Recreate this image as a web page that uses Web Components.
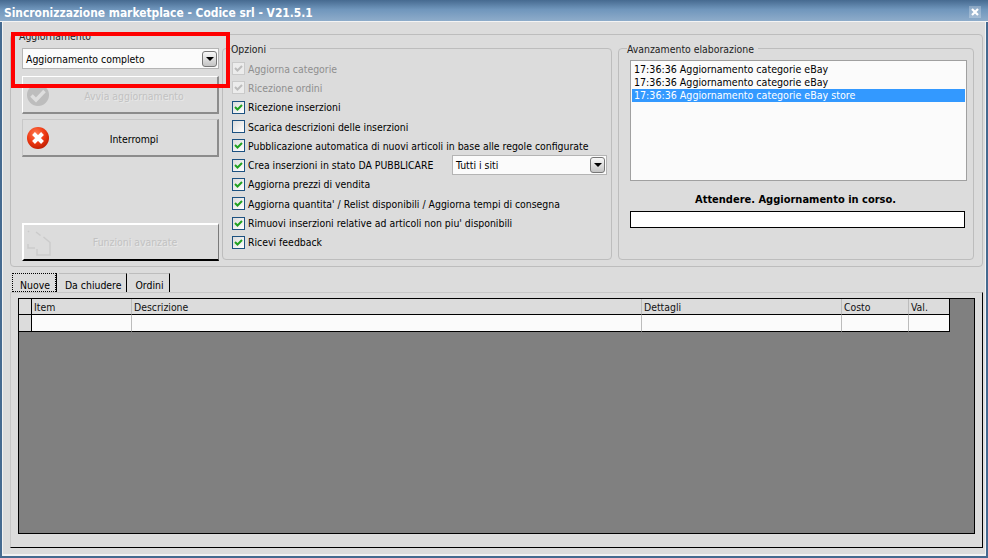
<!DOCTYPE html>
<html lang="it">
<head>
<meta charset="utf-8">
<title>Sincronizzazione marketplace</title>
<style>
    html, body { margin: 0; padding: 0; }
    body {
        position: relative;
        width: 988px;
        height: 558px;
        overflow: hidden;
        font: 10.4px "DejaVu Sans Condensed", "DejaVu Sans", sans-serif;
        color: #000;
    }
    .row { display: flex; align-items: center; justify-content: space-between; }
</style>
</head>
<body>
<app-window>
    <app-titlebar slot="title">Sincronizzazione marketplace - Codice srl - V21.5.1</app-titlebar>

    <app-panel>
        <app-column>
            <span slot="legend">Aggiornamento</span>
            <app-combo slot="combo" width="197" tall>Aggiornamento completo</app-combo>
            <app-button slot="start" disabled>
                <svg slot="icon" width="24" height="24" viewBox="0 0 24 24">
                    <circle cx="12" cy="12" r="11" fill="#bdbdbd"/>
                    <path d="M5.5 12.5l4.5 4.5 8.500-9" fill="none" stroke="#dedede" stroke-width="3.500"/>
                </svg>
                Avvia aggiornamento
            </app-button>
            <app-button slot="stop">
                <svg slot="icon" width="24" height="24" viewBox="0 0 24 24">
                    <defs>
                        <radialGradient id="redball" cx="40%" cy="30%" r="75%">
                            <stop offset="0" stop-color="#ff7a50"/>
                            <stop offset=".55" stop-color="#ee3a14"/>
                            <stop offset="1" stop-color="#bb1c00"/>
                        </radialGradient>
                    </defs>
                    <circle cx="12" cy="12" r="11" fill="url(#redball)"/>
                    <path d="M7.500 7.500l9 9M16.500 7.500l-9 9" fill="none" stroke="#fff" stroke-width="4"/>
                </svg>
                Interrompi
            </app-button>
            <app-button slot="advanced" disabled raised>
                <svg slot="icon" width="24" height="26" viewBox="0 0 24 26">
                    <path d="M1 1l1 1M9 2l4.500 3.500M16.500 7l6.500 5.500v12.500h-13v-6M1 14v4h7" fill="none" stroke="#cbcbcb" stroke-width="1.500"/>
                </svg>
                Funzioni avanzate
            </app-button>
        </app-column>

        <app-group legend="Opzioni" width="390">
            <app-check checked disabled>Aggiorna categorie</app-check>
            <app-check checked disabled>Ricezione ordini</app-check>
            <app-check checked>Ricezione inserzioni</app-check>
            <app-check>Scarica descrizioni delle inserzioni</app-check>
            <app-check checked>Pubblicazione automatica di nuovi articoli in base alle regole configurate</app-check>
            <div class="row">
                <app-check checked>Crea inserzioni in stato DA PUBBLICARE</app-check>
                <app-combo width="155">Tutti i siti</app-combo>
            </div>
            <app-check checked>Aggiorna prezzi di vendita</app-check>
            <app-check checked>Aggiorna quantita' / Relist disponibili / Aggiorna tempi di consegna</app-check>
            <app-check checked>Rimuovi inserzioni relative ad articoli non piu' disponibili</app-check>
            <app-check checked>Ricevi feedback</app-check>
        </app-group>

        <app-group legend="Avanzamento elaborazione" width="356" gap="6">
            <app-progress message="Attendere. Aggiornamento in corso.">
                <span>17:36:36 Aggiornamento categorie eBay</span>
                <span>17:36:36 Aggiornamento categorie eBay</span>
                <span selected>17:36:36 Aggiornamento categorie eBay store</span>
            </app-progress>
        </app-group>
    </app-panel>

    <app-tabs>
        <span slot="tab" active>Nuove</span>
        <span slot="tab">Da chiudere</span>
        <span slot="tab">Ordini</span>
        <app-datagrid></app-datagrid>
    </app-tabs>
</app-window>
<app-callout></app-callout>

<script>
class AppWindow extends HTMLElement {
    constructor() {
        super();
        this.attachShadow({ mode: "open" });
        this.shadowRoot.innerHTML = `
            <style>
                :host {
                    display: flex;
                    flex-direction: column;
                    box-sizing: border-box;
                    width: 988px;
                    height: 558px;
                    background: #dcdcdc;
                    border: 2px solid #456a90;
                    border-top: 0;
                    box-shadow: inset 1px -2px 0 #f2f2f2, inset -1px 0 0 #f2f2f2;
                }
                ::slotted(app-titlebar) { margin: 0 -2px; }
            </style>
            <slot name="title"></slot>
            <slot></slot>
        `;
    }
}

class AppTitlebar extends HTMLElement {
    constructor() {
        super();
        this.attachShadow({ mode: "open" });
        this.shadowRoot.innerHTML = `
            <style>
                :host {
                    display: flex;
                    align-items: center;
                    justify-content: space-between;
                    box-sizing: border-box;
                    height: 22px;
                    padding: 4px 7px 0 4px;
                    color: #fff;
                    font: bold 11.9px "DejaVu Sans Condensed", "DejaVu Sans", sans-serif;
                    background: linear-gradient(#466a90, #7096bc 45%, #8eacca);
                    border-bottom: 1px solid #f4f4f4;
                }
                .close {
                    display: flex;
                    align-self: flex-start;
                    margin-top: 2px;
                    width: 12px;
                    height: 12px;
                    background: rgba(255, 255, 255, .25);
                }
            </style>
            <slot></slot>
            <span class="close">
                <svg width="12" height="12" viewBox="0 0 12 12">
                    <path d="M3 3l6 6M9 3l-6 6" fill="none" stroke="#fff" stroke-width="2.200"/>
                </svg>
            </span>
        `;
    }
}

class AppPanel extends HTMLElement {
    constructor() {
        super();
        this.attachShadow({ mode: "open" });
        this.shadowRoot.innerHTML = `
            <style>
                :host {
                    display: flex;
                    align-items: flex-start;
                    box-sizing: border-box;
                    width: 973px;
                    height: 233px;
                    margin: 12px 0 0 8px;
                    padding: 7px 0 0 11px;
                    border: 1px solid #bdbdbd;
                    border-radius: 4px;
                }
            </style>
            <slot></slot>
        `;
    }
}

class AppColumn extends HTMLElement {
    constructor() {
        super();
        this.attachShadow({ mode: "open" });
        this.shadowRoot.innerHTML = `
            <style>
                :host {
                    display: flex;
                    flex-direction: column;
                    width: 197px;
                    height: 219px;
                }
                .legend { display: block; height: 13px; margin: -13px 0 6px -3px; line-height: 15px; color: #222; }
                ::slotted([slot="combo"]) { flex: none; }
                .start { display: block; margin-top: 7px; }
                .stop { display: block; margin-top: 5px; }
                .advanced { display: block; margin-top: auto; }
            </style>
            <slot class="legend" name="legend"></slot>
            <slot name="combo"></slot>
            <slot class="start" name="start"></slot>
            <slot class="stop" name="stop"></slot>
            <slot class="advanced" name="advanced"></slot>
        `;
    }
}

class AppGroup extends HTMLElement {
    constructor() {
        super();
        this.attachShadow({ mode: "open" });
        this.shadowRoot.innerHTML = `
            <style>
                :host {
                    display: block;
                    flex: none;
                    box-sizing: border-box;
                    height: 218px;
                }
                fieldset {
                    box-sizing: border-box;
                    min-width: 0;
                    height: 100%;
                    margin: 0;
                    padding: 4px 4px 0 9px;
                    border: 1px solid #bdbdbd;
                    border-radius: 4px;
                }
                legend {
                    padding: 0 4px 0 0;
                    margin-left: -1px;
                    height: 13px;
                    line-height: 15px;
                    color: #222;
                }
                ::slotted(*) { height: 19.3px; }
                ::slotted(app-progress) { height: auto; }
            </style>
            <fieldset>
                <legend></legend>
                <slot></slot>
            </fieldset>
        `;
    }

    connectedCallback() {
        this.style.width = this.getAttribute("width") + "px";
        this.style.marginLeft = (this.getAttribute("gap") || 3) + "px";
        this.shadowRoot.querySelector("legend").textContent = this.getAttribute("legend");
    }
}

class AppButton extends HTMLElement {
    constructor() {
        super();
        this.attachShadow({ mode: "open" });
        this.shadowRoot.innerHTML = `
            <style>
                :host {
                    display: flex;
                    align-items: center;
                    box-sizing: border-box;
                    width: 197px;
                    height: 38px;
                    padding-left: 3px;
                    border: 1px solid #c8c8c8;
                    border-right: 2px solid #8c8c8c;
                    border-bottom: 2px solid #8c8c8c;
                    background: #dcdcdc;
                }
                :host([disabled]) {
                    border-left-color: #fff;
                    border-top-color: #fff;
                    color: #c2c2c2;
                    text-shadow: 1px 1px 0 #e8e8e8;
                }
                :host([raised]) {
                    border-width: 2px 1px 2px 2px;
                    border-right-color: #7a7a7a;
                    border-bottom-color: #000;
                }
                .icon { display: block; flex: none; width: 26px; height: 24px; }
                .label { flex: 1; text-align: center; padding: 2px 1px 0 0; }
                :host([raised]) .label { padding-top: 0; }
            </style>
            <slot class="icon" name="icon"></slot>
            <span class="label"><slot></slot></span>
        `;
    }
}

class AppCheck extends HTMLElement {
    constructor() {
        super();
        this.attachShadow({ mode: "open" });
        this.shadowRoot.innerHTML = `
            <style>
                :host {
                    display: flex;
                    align-items: center;
                    gap: 3px;
                    white-space: nowrap;
                    color: #000;
                }
                :host([disabled]) { color: #8f8f8f; }
                .box {
                    box-sizing: border-box;
                    flex: none;
                    width: 13px;
                    height: 13px;
                    border: 1px solid #1c5180;
                    background: linear-gradient(135deg, #dcdcdc, #fff);
                }
                :host([disabled]) .box { border-color: #cacaca; background: #ececec; }
                svg { display: none; }
                :host([checked]) svg { display: block; }
                :host([disabled]) path { stroke: #bcbcbc; }
            </style>
            <span class="box">
                <svg width="11" height="11" viewBox="0 0 11 11">
                    <path d="M2 5l2.500 2.500L9 3" fill="none" stroke="#21a121" stroke-width="2"/>
                </svg>
            </span>
            <slot></slot>
        `;
    }
}

class AppCombo extends HTMLElement {
    constructor() {
        super();
        this.attachShadow({ mode: "open" });
        this.shadowRoot.innerHTML = `
            <style>
                :host {
                    display: flex;
                    align-items: center;
                    justify-content: space-between;
                    box-sizing: border-box;
                    height: 20px;
                    padding: 0 1px 0 3px;
                    background: #fbfbfb;
                    border: 1px solid #b4b4b4;
                    white-space: nowrap;
                }
                :host([tall]) { height: 21px; }
                .arrow {
                    display: flex;
                    align-items: center;
                    justify-content: center;
                    box-sizing: border-box;
                    width: 15px;
                    height: 16px;
                    border: 1px solid #777;
                    border-radius: 3px;
                    background: linear-gradient(#f8f8f8, #c4c4c4);
                }
                .arrow::before {
                    content: "";
                    border: 4px solid transparent;
                    border-top: 4px solid #000;
                    border-bottom: 0;
                }
            </style>
            <span><slot></slot></span>
            <span class="arrow"></span>
        `;
    }

    connectedCallback() {
        this.style.width = this.getAttribute("width") + "px";
    }
}

class AppProgress extends HTMLElement {
    constructor() {
        super();
        this.attachShadow({ mode: "open" });
        this.shadowRoot.innerHTML = `
            <style>
                :host {
                    display: flex;
                    flex-direction: column;
                    margin: 1px 0 0 2px;
                }
                .log {
                    display: flex;
                    flex-direction: column;
                    box-sizing: border-box;
                    width: 337px;
                    height: 121px;
                    padding: 2px 1px;
                    background: #fbfbfb;
                    border: 1px solid #a0a0a0;
                    white-space: nowrap;
                    font-size: 10.6px;
                }
                ::slotted(span) { display: block; height: 13px; line-height: 12px; padding-left: 2px; }
                ::slotted(span[selected]) { background: #3399ff; color: #fff; }
                .message {
                    width: 331px;
                    margin-top: 12px;
                    height: 14px;
                    line-height: 14px;
                    text-align: center;
                    font-weight: bold;
                    font-size: 11px;
                }
                .bar {
                    box-sizing: border-box;
                    width: 335px;
                    height: 17px;
                    margin-top: 4px;
                    background: #fff;
                    border: 1px solid #000;
                }
            </style>
            <div class="log"><slot></slot></div>
            <div class="message"></div>
            <div class="bar"></div>
        `;
    }

    connectedCallback() {
        this.shadowRoot.querySelector(".message").textContent = this.getAttribute("message");
    }
}

class AppTabs extends HTMLElement {
    constructor() {
        super();
        this.attachShadow({ mode: "open" });
        this.shadowRoot.innerHTML = `
            <style>
                :host {
                    display: flex;
                    flex-direction: column;
                    margin: 6px 0 0 8px;
                    width: 973px;
                }
                .strip { display: flex; height: 19px; padding-left: 2px; }
                ::slotted(span) {
                    box-sizing: border-box;
                    height: 19px;
                    line-height: 22px;
                    padding: 0 5px 0 6px;
                    margin-right: 2px;
                    border-top: 1px solid #bdbdbd;
                    border-right: 1px solid #000;
                    white-space: nowrap;
                }
                ::slotted(span[active]) {
                    outline: 1px dotted #000;
                    outline-offset: -1px;
                    border-top: 0;
                    line-height: 24px;
                    padding: 0 6px 0 8px;
                    margin-right: 3px;
                    border-right: 0;
                    box-shadow: 1px 0 0 #000;
                }
                .page {
                    box-sizing: border-box;
                    height: 256px;
                    padding: 5px 0 0 7px;
                    border-top: 1px solid #c8c8c8;
                    border-left: 1px solid #c8c8c8;
                    border-right: 1px solid #000;
                    border-bottom: 1px solid #000;
                }
            </style>
            <div class="strip"><slot name="tab"></slot></div>
            <div class="page"><slot></slot></div>
        `;
    }
}

class AppDatagrid extends HTMLElement {
    constructor() {
        super();
        const columns = ["", "Item", "Descrizione", "Dettagli", "Costo", "Val."];
        const head = columns.map(name => `<div class="cell head">${name}</div>`).join("");
        const body = columns.map(() => `<div class="cell"></div>`).join("");
        this.attachShadow({ mode: "open" });
        this.shadowRoot.innerHTML = `
            <style>
                :host {
                    display: block;
                    box-sizing: border-box;
                    width: 957px;
                    height: 236px;
                    background: #808080;
                    border: 1px solid #000;
                }
                .table {
                    display: grid;
                    width: 931px;
                    grid-template-columns: 13px 100px 510px 200px 67px 41px;
                    grid-template-rows: 16px 17px;
                }
                .cell {
                    box-sizing: border-box;
                    padding-left: 2px;
                    background: #fbfbfb;
                    border-right: 1px solid #bcbcbc;
                    border-bottom: 1px solid #000;
                }
                .head { background: #dcdcdc; line-height: 17px; color: #111; }
                .cell:nth-child(6n + 1) { background: #dcdcdc; border-right-color: #000; }
                .cell:nth-child(6n) { border-right-color: #000; }
            </style>
            <div class="table">${head}${body}</div>
        `;
    }
}

class AppCallout extends HTMLElement {
    constructor() {
        super();
        this.attachShadow({ mode: "open" });
        this.shadowRoot.innerHTML = `
            <style>
                :host {
                    position: absolute;
                    left: 11px;
                    top: 32px;
                    box-sizing: border-box;
                    width: 219px;
                    height: 56px;
                    border: 4px solid #f00;
                }
            </style>
        `;
    }
}

customElements.define("app-window", AppWindow);
customElements.define("app-titlebar", AppTitlebar);
customElements.define("app-panel", AppPanel);
customElements.define("app-column", AppColumn);
customElements.define("app-group", AppGroup);
customElements.define("app-button", AppButton);
customElements.define("app-check", AppCheck);
customElements.define("app-combo", AppCombo);
customElements.define("app-progress", AppProgress);
customElements.define("app-tabs", AppTabs);
customElements.define("app-datagrid", AppDatagrid);
customElements.define("app-callout", AppCallout);
</script>
</body>
</html>
